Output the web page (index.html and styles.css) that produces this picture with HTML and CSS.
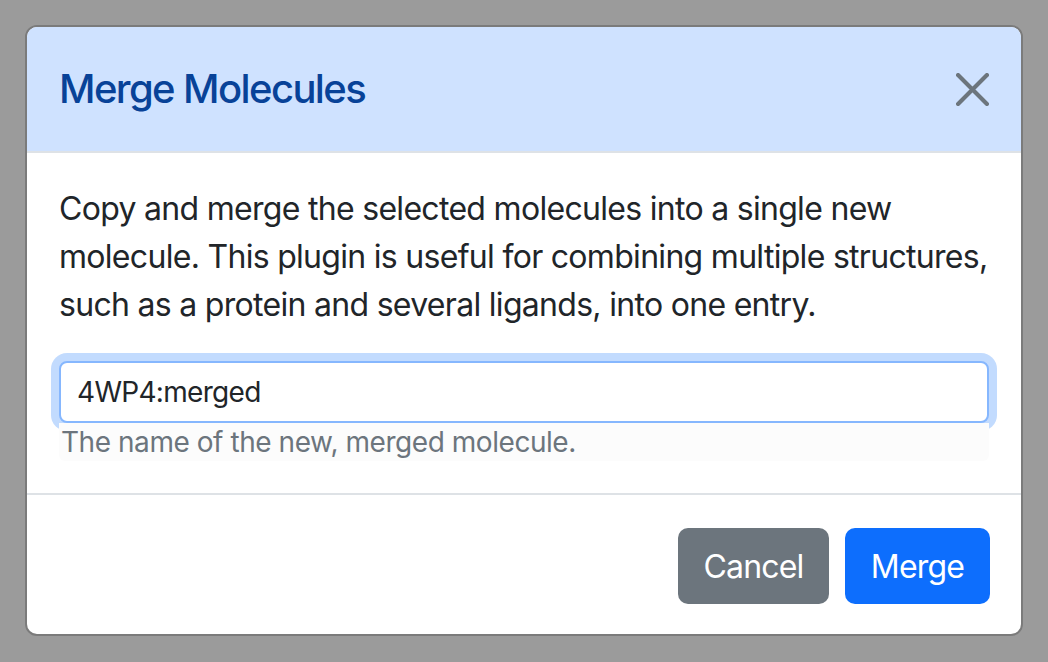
FILE: index.html
```html
<!DOCTYPE html>
<html lang="en">
<head>
<meta charset="utf-8">
<title>Merge Molecules</title>
<link rel="stylesheet" href="styles.css">
</head>
<body>
<div class="modal">
  <div class="modal-header">
    <h5 class="modal-title">Merge Molecules</h5>
    <button class="btn-close" type="button" aria-label="Close">
      <svg viewBox="0 0 32 32" width="32" height="32" aria-hidden="true">
        <path d="M2 2 L30 30 M30 2 L2 30" stroke="#6c757d" stroke-width="4" stroke-linecap="round" fill="none"/>
      </svg>
    </button>
  </div>
  <div class="modal-body">
    <p class="intro"><span class="line">Copy and merge the selected molecules into a single new</span><span class="line">molecule. This plugin is useful for combining multiple structures,</span><span class="line">such as a protein and several ligands, into one entry.</span></p>
    <input class="form-control" type="text" value="4WP4:merged">
    <div class="form-text">The name of the new, merged molecule.</div>
  </div>
  <div class="modal-footer">
    <button class="btn btn-secondary" type="button">Cancel</button>
    <button class="btn btn-primary" type="button">Merge</button>
  </div>
</div>
</body>
</html>
```
FILE: styles.css
```css
html, body {
  margin: 0;
  padding: 0;
}
body {
  background: #9b9b9b;
  padding: 25px;
  font-family: "Inter", "Liberation Sans", sans-serif;
  color: #212529;
}
.modal {
  width: 998px;
  box-sizing: border-box;
  background: #fff;
  border: 2px solid #7b7b7b;
  border-radius: 12px;
  overflow: hidden;
}
.modal-header {
  height: 124px;
  background: #cfe2ff;
  border-bottom: 2px solid #dee2e6;
  display: flex;
  align-items: center;
  justify-content: space-between;
  padding: 0 32px 0 32px;
}
.modal-title {
  margin: 0;
  font-size: 40px;
  font-weight: 500;
  line-height: 48px;
  letter-spacing: -1.6px;
  color: #084298;
}
.btn-close {
  border: 0;
  background: transparent;
  padding: 0;
  width: 33px;
  height: 33px;
  display: flex;
}
.btn-close svg {
  width: 33px;
  height: 33px;
}
.modal-body {
  padding: 32px;
}
.intro {
  margin: 0 0 32px;
  font-size: 32px;
  line-height: 48px;
  letter-spacing: -0.7px;
  white-space: nowrap;
}
.line {
  display: block;
}
.form-control {
  display: block;
  box-sizing: border-box;
  width: 100%;
  height: 62px;
  margin: 0;
  padding: 0 16px;
  font-family: inherit;
  font-size: 28px;
  letter-spacing: -0.7px;
  color: #212529;
  border: 2px solid #86b7fe;
  border-radius: 8px;
  box-shadow: 0 0 0 8px rgba(13, 110, 253, 0.25);
  outline: none;
}
.form-text {
  height: 38px;
  line-height: 38px;
  font-size: 28px;
  letter-spacing: -0.45px;
  color: #6c757d;
  background: #fcfcfc;
  border-radius: 0 0 6px 6px;
  padding-left: 2px;
}
.modal-footer {
  border-top: 2px solid #dee2e6;
  padding: 33px 31px 30px;
  display: flex;
  justify-content: flex-end;
  gap: 16px;
}
.btn {
  height: 76px;
  border: 0;
  border-radius: 10px;
  font-family: inherit;
  font-size: 32px;
  letter-spacing: -0.8px;
  color: #fff;
  padding: 0;
}
.btn-secondary {
  width: 151px;
  background: #6c757d;
}
.btn-primary {
  width: 145px;
  background: #0d6efd;
}
```
